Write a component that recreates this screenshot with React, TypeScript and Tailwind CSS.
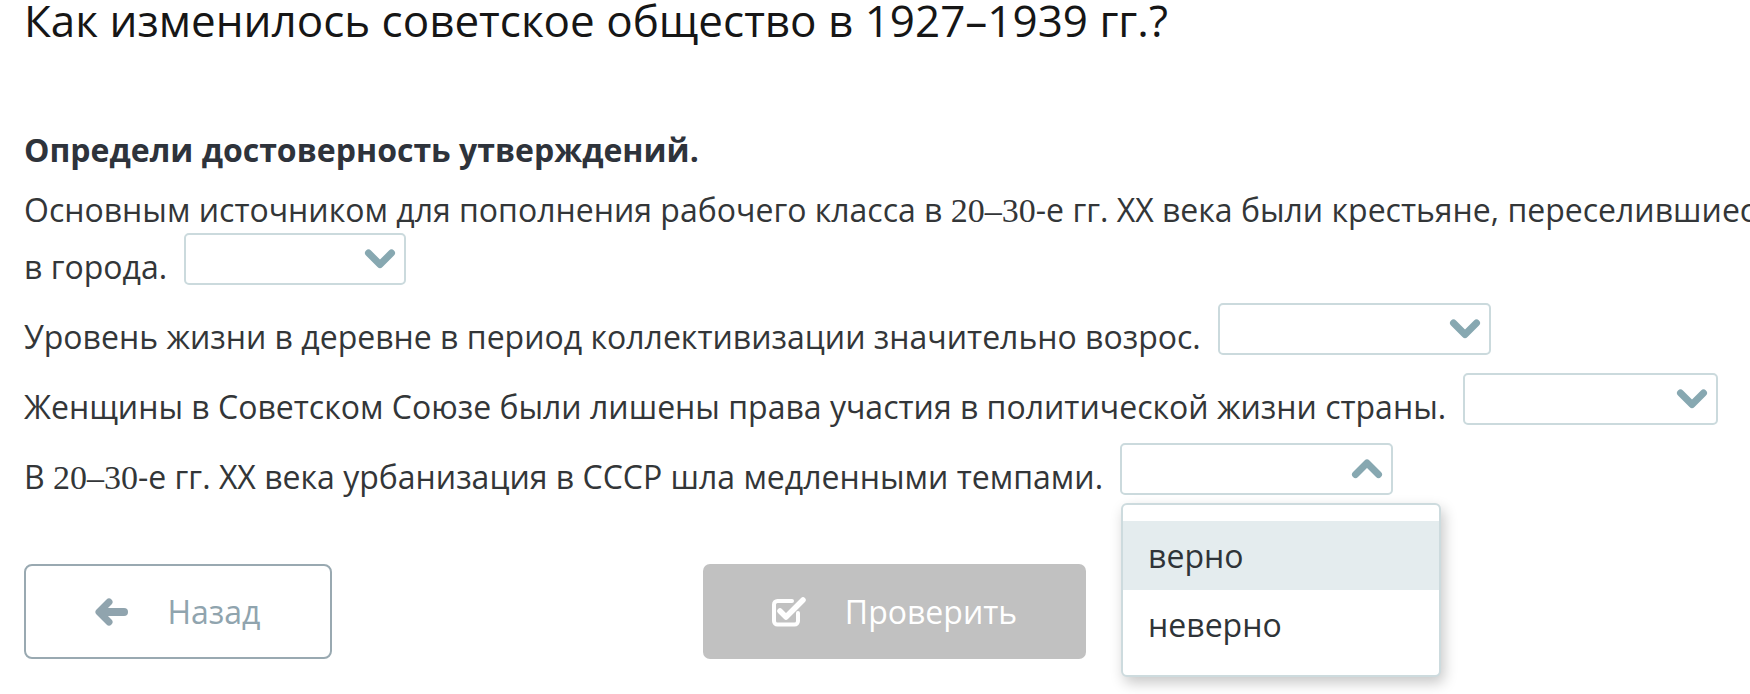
import React from "react";

const serif = "font-['Liberation_Serif',serif] text-[34px]";

function Chevron({ up = false }: { up?: boolean }) {
  return (
    <svg width="32" height="22" viewBox="0 0 32 22" fill="none">
      <path
        d={up ? "M4.5 16.5L16 5L27.5 16.5" : "M4.5 5L16 16.5L27.5 5"}
        stroke="#87a8b1"
        strokeWidth="7"
        strokeLinecap="round"
        strokeLinejoin="round"
      />
    </svg>
  );
}

function Drop({ w, open = false, children }: { w: string; open?: boolean; children?: React.ReactNode }) {
  return (
    <span
      className={`relative inline-block ${w} h-[52px] ml-[17px] align-[-6px] rounded-[5px] border-2 border-[#cbdadd] bg-white`}
    >
      <span className="absolute right-[8px] top-1/2 -translate-y-1/2 flex">
        <Chevron up={open} />
      </span>
      {children}
    </span>
  );
}

function CheckIcon() {
  return (
    <svg width="36" height="32" viewBox="0 0 36 32" fill="none">
      <path
        d="M27 17v8a3.5 3.5 0 0 1-3.5 3.5H6.5A3.5 3.5 0 0 1 3 25V8.5A3.5 3.5 0 0 1 6.5 5H21"
        stroke="white"
        strokeWidth="4"
        strokeLinecap="round"
      />
      <path d="M9 15l6 6L32 4" stroke="white" strokeWidth="5.5" strokeLinecap="round" strokeLinejoin="round" />
    </svg>
  );
}

function ArrowIcon() {
  return (
    <svg width="34" height="28" viewBox="0 0 34 28" fill="none">
      <path d="M14 4L4 14L14 24" stroke="#90a4ae" strokeWidth="7" strokeLinecap="round" strokeLinejoin="round" />
      <path d="M6 14H29" stroke="#90a4ae" strokeWidth="8" strokeLinecap="round" />
    </svg>
  );
}

export default function App() {
  return (
    <div className="w-[1750px] h-[694px] overflow-hidden bg-white font-['Open_Sans',sans-serif]">
      <div className="w-[1764px] pl-[24px]">
        <h1 className="text-[44px] leading-[40px] text-[#161616] whitespace-nowrap">
          Как изменилось советское общество в 1927–1939 гг.?
        </h1>
        <p className="mt-[87px] text-[32px] leading-[45px] font-bold text-[#2e333b]">
          Определи достоверность утверждений.
        </p>
        <div className="text-[32px] leading-[45px] text-[#333638]">
          <p className="mt-[15px] whitespace-nowrap">
            Основным источником для пополнения рабочего класса в <span className={serif}>20–30</span>-е гг. XX века были
            крестьяне, переселившиеся
            <br />в города.
            <Drop w="w-[222px]" />
          </p>
          <p className="mt-[14px] whitespace-nowrap">
            Уровень жизни в деревне в период коллективизации значительно возрос.
            <Drop w="w-[273px]" />
          </p>
          <p className="mt-[14px] whitespace-nowrap">
            Женщины в Советском Союзе были лишены права участия в политической жизни страны.
            <Drop w="w-[255px]" />
          </p>
          <p className="mt-[14px] whitespace-nowrap">
            В <span className={serif}>20–30</span>-е гг. XX века урбанизация в СССР шла медленными темпами.
            <Drop w="w-[273px]" open>
              <span className="absolute left-[-1px] top-[58px] z-10 w-[320px] py-[16px] rounded-[6px] border-2 border-[#cddbde] bg-white shadow-[3px_6px_14px_rgba(0,0,0,0.22)]">
                <span className="flex h-[69px] items-center px-[25px] bg-[#e4ecee] text-[#2f3438]">верно</span>
                <span className="flex h-[69px] items-center px-[25px] text-[#2f3438]">неверно</span>
              </span>
            </Drop>
          </p>
        </div>
        <div className="mt-[64px] grid grid-cols-[1fr_auto_1fr] items-start">
          <div>
            <button className="flex w-[308px] h-[95px] items-center justify-center gap-[38px] rounded-[8px] border-2 border-[#99a9b1] bg-white text-[32px] text-[#90a4ae]">
              <ArrowIcon />
              <span>Назад</span>
            </button>
          </div>
          <button className="flex w-[383px] h-[95px] items-center justify-center gap-[38px] rounded-[7px] bg-[#c1c1c1] text-[32px] text-white">
            <CheckIcon />
            <span>Проверить</span>
          </button>
          <div />
        </div>
      </div>
    </div>
  );
}
